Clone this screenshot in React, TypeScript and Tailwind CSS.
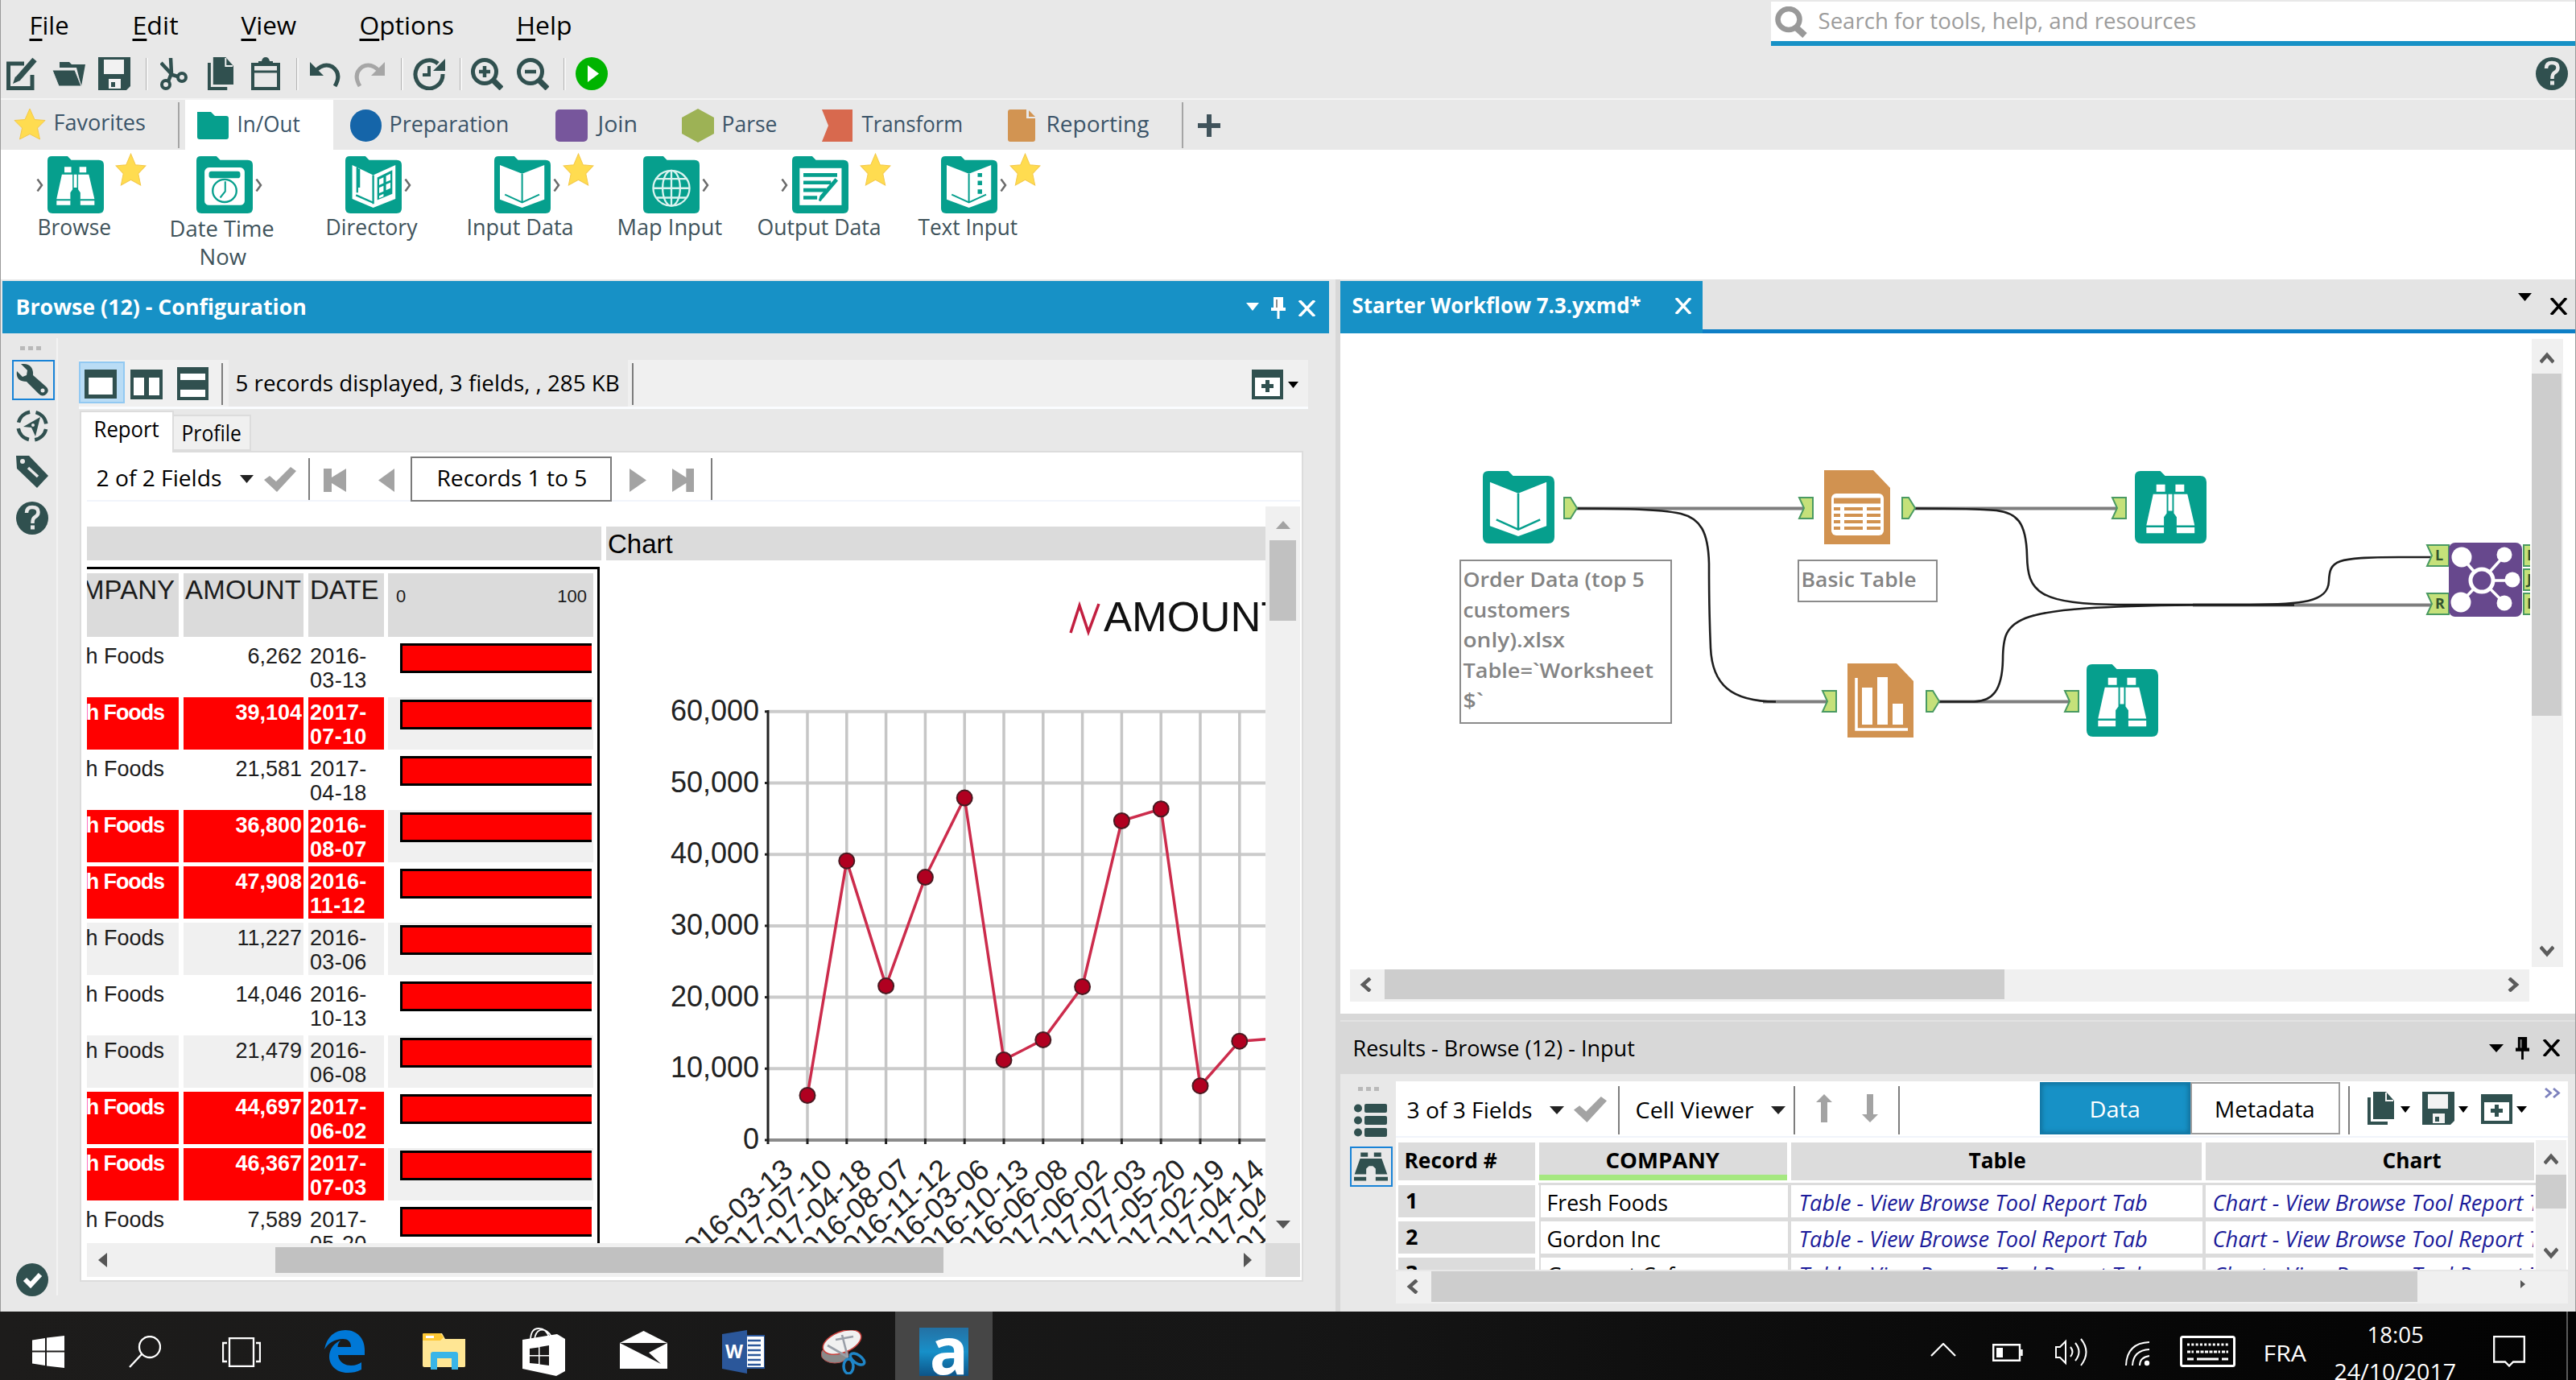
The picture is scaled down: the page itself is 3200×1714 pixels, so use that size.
import React, { ReactNode, useLayoutEffect, useRef, useState } from 'react';

const INK = '#30504f';

/* Single-line label whose glyphs are condensed or expanded to fill its box. */
function Fit({ className = '', children }: { className?: string; children: ReactNode }) {
  const outer = useRef<HTMLSpanElement>(null);
  const inner = useRef<HTMLSpanElement>(null);
  const [scale, setScale] = useState(1);
  useLayoutEffect(() => {
    if (outer.current && inner.current) {
      setScale((outer.current.offsetWidth + 2) / inner.current.offsetWidth);
    }
  }, []);
  return (
    <span ref={outer} className={`block shrink-0 whitespace-nowrap ${className}`}>
      <span
        ref={inner}
        className="inline-block origin-left"
        style={{ transform: `translateX(-0.5px) scaleX(${scale})` }}
      >
        {children}
      </span>
    </span>
  );
}

function Svg({ vb, className = '', children }: { vb: string; className?: string; children: ReactNode }) {
  return (
    <svg viewBox={vb} preserveAspectRatio="none" fill="none" className={`block shrink-0 ${className}`}>
      {children}
    </svg>
  );
}

/* ---------- small glyphs ---------- */

const Caret = ({ className = '' }: { className?: string }) => (
  <Svg vb="0 0 16 10" className={className}>
    <path d="M0 0H16L8 10Z" fill="currentColor" />
  </Svg>
);

const Cross = ({ className = '' }: { className?: string }) => (
  <Svg vb="0 0 22 20" className={className}>
    <path d="M2 0L20 20M20 0L2 20" stroke="currentColor" strokeWidth="3.4" />
  </Svg>
);

const Pin = ({ className = '' }: { className?: string }) => (
  <Svg vb="0 0 18 27" className={className}>
    <path d="M3 0H15V13H18V17H10.5V27H7.5V17H0V13H3Z" fill="currentColor" />
    <path d="M6 3H8V13H6Z" fill="#8d8d8d" />
  </Svg>
);

const Check = ({ className = '' }: { className?: string }) => (
  <Svg vb="0 0 40 31" className={className}>
    <path d="M0 16L7 11L15 18L33 0L40 5L16 31Z" fill="#a3a3a3" />
  </Svg>
);

const Chevron = ({ className = '' }: { className?: string }) => (
  <Svg vb="0 0 16 18" className={className}>
    <path d="M3 1L12 9L3 17" stroke="#5c5c5c" strokeWidth="4.5" />
  </Svg>
);

const Sep = ({ className = '' }: { className?: string }) => (
  <div className={`w-[2px] shrink-0 bg-[#7d7d7d] ${className}`} />
);

const BarSep = ({ className = '' }: { className?: string }) => (
  <div className={`h-[40px] w-[3px] shrink-0 border-l border-r-2 border-l-[#b4b4b4] border-r-[#f6f6f6] ${className}`} />
);

const Star = ({ className = '' }: { className?: string }) => (
  <Svg vb="0 0 40 40" className={className}>
    <path
      d="M20 1L26 14.5L39 15.5L29.500 25L32.500 39L20 32.500L7.500 39L10.500 25L1 15.500L14 14.500Z"
      fill="#ffdc50"
      stroke="#f4c84a"
      strokeWidth="1"
    />
  </Svg>
);

const Help = ({ className = '' }: { className?: string }) => (
  <Svg vb="0 0 40 41" className={className}>
    <ellipse cx="20" cy="20.500" rx="20" ry="20.500" fill={INK} />
    <path d="M13 14Q13 7 20 7Q27.500 7 27.500 13Q27.500 17 23 19.500Q20.500 21 20.500 27" stroke="#e8e8e8" strokeWidth="4.500" />
    <rect x="18" y="29.500" width="5" height="5" fill="#e8e8e8" />
  </Svg>
);

const Save = ({ className = '' }: { className?: string }) => (
  <Svg vb="0 0 40 41" className={className}>
    <path d="M0 0H40V36L35 41H0Z" fill={INK} />
    <rect x="7" y="3" width="25" height="18" fill="#f2f2f2" />
    <rect x="13" y="27" width="15" height="12" fill="#f2f2f2" />
    <rect x="16" y="31" width="5" height="6" fill={INK} />
  </Svg>
);

const Copy = ({ className = '' }: { className?: string }) => (
  <Svg vb="0 0 33 41" className={className}>
    <path d="M0 7H4V37H25V41H0Z" fill={INK} />
    <path d="M7 0H23L33 11V34H7Z" fill={INK} />
    <path d="M23 1V11H32" stroke="#f2f2f2" strokeWidth="2" />
  </Svg>
);

const PlusWindow = ({ className = '' }: { className?: string }) => (
  <Svg vb="0 0 39 37" className={className}>
    <rect width="39" height="37" fill={INK} />
    <rect x="4" y="10" width="31" height="23" fill="#fff" />
    <path d="M19.500 13V28M12 20.500H27" stroke={INK} strokeWidth="5" />
  </Svg>
);

const Binoculars = ({ fill, band }: { fill: string; band: string }) => (
  <>
    <path d="M27 17H38V26H27ZM51 17H62V26H51ZM42 29H47V50H42Z" fill={fill} />
    <path d="M23 29H40V53L36.500 58V78H14.500V68Z" fill={fill} />
    <path d="M66 29H49V53L52.500 58V78H75V68Z" fill={fill} />
    <path d="M13 69.500H37M52 69.500H76" stroke={band} strokeWidth="2.500" />
  </>
);

/* ---------- tool glyphs on the teal folder ---------- */

const T = '#069f8d';

const Book = () => (
  <>
    <path d="M9 14L44.500 28L80 14V69L44.500 82L9 69Z" fill="#fff" />
    <path d="M44.500 28V73M17 61L44.500 73.500L72 61" stroke={T} strokeWidth="2.600" />
  </>
);

const glyphs: Record<string, ReactNode> = {
  browse: <Binoculars fill="#fff" band={T} />,
  input: <Book />,
  date: (
    <>
      <rect x="13" y="18" width="64" height="60" rx="7" fill="#fff" />
      <rect x="20" y="24" width="50" height="11" rx="4" fill={T} />
      <ellipse cx="45" cy="55" rx="19" ry="18" stroke={T} strokeWidth="3" />
      <path d="M46 40V56L38 66" stroke={T} strokeWidth="2.600" />
    </>
  ),
  directory: (
    <>
      <path d="M11 14L44.500 30L80 14V68L44.500 82L11 68Z" fill="#fff" />
      <path d="M44.500 30V76M19 18V58M22 20V50M17 62L44.500 74" stroke={T} strokeWidth="3" />
      <path d="M51 34L75 22V60L51 70Z" fill={T} />
      <path d="M54 37L61 33.500V43L54 46ZM65 31.500L72 28V38L65 41ZM54 50L61 47V56L54 59ZM65 45L72 42V51L65 54ZM54 63L61 60V64L54 67Z" fill="#fff" />
    </>
  ),
  map: (
    <g stroke="#d9f3ef" strokeWidth="3">
      <ellipse cx="45" cy="51" rx="29" ry="28" />
      <ellipse cx="45" cy="51" rx="14" ry="28" />
      <path d="M45 23V79M16 51H74M21 36H69M21 66H69" />
    </g>
  ),
  output: (
    <>
      <rect x="12" y="19" width="67" height="59" fill="#fff" />
      <path d="M18 30H72M18 42H62M18 54H54M18 66H40" stroke={T} strokeWidth="6" />
      <path d="M72 38L48 66L44 71L46 64L70 36" stroke={T} strokeWidth="3.500" fill="#fff" />
    </>
  ),
  text: (
    <>
      <Book />
      <path d="M62 27V33M62 39V46M62 53V60" stroke={T} strokeWidth="7" />
    </>
  ),
};

const Folder = ({ glyph, className = '' }: { glyph: string; className?: string }) => (
  <Svg vb="0 0 90 91" className={className}>
    <path d="M7 0H32L38 6H82Q90 6 90 14V83Q90 91 82 91H8Q0 91 0 83V7Q0 0 7 0Z" fill={T} />
    {glyphs[glyph]}
  </Svg>
);

/* ---------- header ---------- */

const Menu = ({ k, rest, className }: { k: string; rest: string; className: string }) => (
  <Fit className={`mt-[11px] text-[31px] leading-[40px] text-black ${className}`}>
    <span className="underline decoration-[3px] underline-offset-[5px]">{k}</span>
    {rest}
  </Fit>
);

function Header() {
  return (
    <div className="flex h-[122px] shrink-0 justify-between">
      <div>
        <div className="flex h-[64px]">
          <Menu k="F" rest="ile" className="ml-[36px] w-[47px]" />
          <Menu k="E" rest="dit" className="ml-[81px] w-[55px]" />
          <Menu k="V" rest="iew" className="ml-[80px] w-[67px]" />
          <Menu k="O" rest="ptions" className="ml-[80px] w-[115px]" />
          <Menu k="H" rest="elp" className="ml-[80px] w-[67px]" />
        </div>
        <div className="flex h-[55px] items-center">
          <Svg vb="0 0 39 41" className="ml-[7px] h-[41px] w-[39px]">
            <path d="M22 8H2.500V38.500H32V22" stroke={INK} strokeWidth="5" />
            <path d="M35 3L14 27" stroke={INK} strokeWidth="7" />
            <path d="M11 24L17 29L8 33Z" fill={INK} />
          </Svg>
          <Svg vb="0 0 41 30" className="ml-[18px] h-[30px] w-[41px]">
            <path d="M9 7V0H21L24 3H41L36 30L30 7Z" fill={INK} />
            <path d="M0 10H28L36 30H8Z" fill={INK} stroke="#e8e8e8" strokeWidth="1" />
          </Svg>
          <Save className="ml-[16px] h-[41px] w-[40px]" />
          <BarSep className="ml-[19px]" />
          <Svg vb="0 0 34 41" className="ml-[15px] h-[41px] w-[34px]">
            <circle cx="7" cy="34" r="5" stroke={INK} strokeWidth="4" />
            <circle cx="27" cy="25" r="5" stroke={INK} strokeWidth="4" />
            <path d="M13 1L14 20L10 30M1 7L15 22L22 24" stroke={INK} strokeWidth="4.500" />
          </Svg>
          <Copy className="ml-[25px] h-[41px] w-[32px]" />
          <Svg vb="0 0 36 41" className="ml-[22px] h-[41px] w-[36px]">
            <rect x="2" y="9" width="32" height="30" stroke={INK} strokeWidth="4" />
            <path d="M9 11V5H13Q14 0 18 0Q22 0 23 5H27V11Z" fill={INK} />
            <path d="M2 18H34" stroke={INK} strokeWidth="3" />
          </Svg>
          <BarSep className="ml-[20px]" />
          <Svg vb="0 0 38 35" className="ml-[14px] h-[35px] w-[38px]">
            <path d="M6 15Q17 3 28 9Q40 18 31 33" stroke={INK} strokeWidth="5" />
            <path d="M0 3V20H17Z" fill={INK} />
          </Svg>
          <Svg vb="0 0 38 35" className="ml-[17px] h-[35px] w-[38px]">
            <path d="M32 15Q21 3 10 9Q-2 18 7 33" stroke="#a6a6a6" strokeWidth="5" />
            <path d="M38 3V20H21Z" fill="#a6a6a6" />
          </Svg>
          <BarSep className="ml-[20px]" />
          <Svg vb="0 0 40 41" className="ml-[12px] h-[41px] w-[40px]">
            <path d="M31 8A17 17.500 0 1 0 37 21" stroke={INK} strokeWidth="5" />
            <path d="M40 2V17H25Z" fill={INK} />
            <path d="M20 11V22H12" stroke={INK} strokeWidth="4" />
          </Svg>
          <BarSep className="ml-[18px]" />
          <Svg vb="0 0 40 41" className="ml-[11px] h-[41px] w-[40px]">
            <circle cx="17" cy="18" r="14.500" stroke={INK} strokeWidth="5" />
            <path d="M28 29L38 39" stroke={INK} strokeWidth="7" />
            <path d="M17 11V25M10 18H24" stroke={INK} strokeWidth="4.500" />
          </Svg>
          <Svg vb="0 0 40 41" className="ml-[17px] h-[41px] w-[40px]">
            <circle cx="17" cy="18" r="14.500" stroke={INK} strokeWidth="5" />
            <path d="M28 29L38 39" stroke={INK} strokeWidth="7" />
            <path d="M10 18H24" stroke={INK} strokeWidth="4.500" />
          </Svg>
          <BarSep className="ml-[18px]" />
          <Svg vb="0 0 40 41" className="ml-[12px] h-[41px] w-[40px]">
            <ellipse cx="20" cy="20.500" rx="20" ry="20.500" fill="#00b400" />
            <path d="M15 10L29 20.500L15 31Z" fill="#fff" />
          </Svg>
        </div>
      </div>
      <div className="flex w-[999px] flex-col items-end">
        <div className="mt-[2px] flex h-[55px] w-full items-start border-b-[6px] border-[#1791c6] bg-white">
          <Svg vb="0 0 40 39" className="ml-[5px] mt-[6px] h-[39px] w-[40px]">
            <ellipse cx="17" cy="16" rx="13.500" ry="13" stroke="#999" strokeWidth="6.500" />
            <path d="M26 26L37 36" stroke="#999" strokeWidth="8" />
          </Svg>
          <Fit className="ml-[14px] mt-[4px] w-[468px] text-[27px] leading-[40px] text-[#9c9c9c]">
            Search for tools, help, and resources
          </Fit>
        </div>
        <Help className="mr-[9px] mt-[14px] h-[41px] w-[40px]" />
      </div>
    </div>
  );
}

function Categories() {
  const label = 'mt-[9px] text-[28px] leading-[40px] text-[#3b5468]';
  return (
    <div className="flex h-[64px] shrink-0 border-t-2 border-[#f4f4f4]">
      <Star className="ml-[16px] mt-[10px] h-[40px] w-[40px]" />
      <Fit className="ml-[10px] mt-[7px] w-[112px] text-[28px] leading-[40px] text-[#3b5468]">Favorites</Fit>
      <div className="ml-[42px] mt-[3px] h-[57px] w-[2px] bg-[#a5a5a5]" />
      <div className="ml-[7px] flex w-[184px] bg-white">
        <Svg vb="0 0 39 34" className="ml-[15px] mt-[15px] h-[34px] w-[39px]">
          <path d="M3 0H17L22 5H36Q39 5 39 8V31Q39 34 36 34H3Q0 34 0 31V0Z" fill={T} />
        </Svg>
        <Fit className={`ml-[11px] w-[76px] ${label}`}>In/Out</Fit>
      </div>
      <div className="ml-[21px] mt-[12px] h-[40px] w-[39px] rounded-full bg-[#1565a9]" />
      <Fit className={`ml-[10px] w-[147px] ${label}`}>Preparation</Fit>
      <div className="ml-[59px] mt-[12px] h-[40px] w-[40px] rounded-[5px] bg-[#77569c]" />
      <Fit className={`ml-[13px] w-[48px] ${label}`}>Join</Fit>
      <Svg vb="0 0 40 42" className="ml-[56px] mt-[11px] h-[42px] w-[40px]">
        <path d="M20 0L40 11V31L20 42L0 31V11Z" fill="#9db255" />
      </Svg>
      <Fit className={`ml-[10px] w-[67px] ${label}`}>Parse</Fit>
      <Svg vb="0 0 38 40" className="ml-[57px] mt-[12px] h-[40px] w-[38px]">
        <path d="M0 0H38V40H0L8 20Z" fill="#d8694e" />
      </Svg>
      <Fit className={`ml-[12px] w-[124px] ${label}`}>Transform</Fit>
      <Svg vb="0 0 34 40" className="ml-[57px] mt-[12px] h-[40px] w-[34px]">
        <path d="M3 0H23V11H34V37Q34 40 31 40H3Q0 40 0 37V3Q0 0 3 0Z" fill="#d29452" />
        <path d="M26 1L34 9H26Z" fill="#d29452" />
      </Svg>
      <Fit className={`ml-[14px] w-[126px] ${label}`}>Reporting</Fit>
      <div className="ml-[42px] mt-[3px] h-[57px] w-[2px] bg-[#a5a5a5]" />
      <Svg vb="0 0 28 28" className="ml-[18px] mt-[18px] h-[28px] w-[28px]">
        <path d="M14 0V28M0 14H28" stroke="#40535b" strokeWidth="6" />
      </Svg>
    </div>
  );
}

const PaletteArrow = ({ className }: { className: string }) => (
  <Svg vb="0 0 9 16" className={`mt-[36px] h-[16px] w-[9px] ${className}`}>
    <path d="M1.500 0.500L7 8L1.500 15.500" stroke="#6b6b6b" strokeWidth="2.500" />
  </Svg>
);

function Tool({ glyph, before, after, star, children }: { glyph: string; before?: boolean; after?: boolean; star?: boolean; children: ReactNode }) {
  return (
    <div className="flex w-[185px] flex-col items-center">
      <div className="flex h-[78px] w-full">
        <div className="flex flex-1 justify-end">{before && <PaletteArrow className="mr-[5px]" />}</div>
        <Folder glyph={glyph} className="mt-[8px] h-[71px] w-[70px]" />
        <div className="flex flex-1">
          {after && <PaletteArrow className="ml-[3px]" />}
          {star && <Star className={after ? 'ml-[3px] mt-[4px] h-[41px] w-[39px]' : 'ml-[14px] mt-[4px] h-[41px] w-[39px]'} />}
        </div>
      </div>
      {children}
    </div>
  );
}

function Palette() {
  const l = 'text-[27px] leading-[36px] text-[#40535b]';
  return (
    <div className="flex h-[161px] shrink-0 bg-white">
      <Tool glyph="browse" before star><Fit className={`mr-[3px] w-[90px] ${l}`}>Browse</Fit></Tool>
      <Tool glyph="date" after>
        <Fit className="mr-[7px] mt-[2px] w-[128px] text-[27px] leading-[35px] text-[#40535b]">Date Time</Fit>
        <Fit className="mr-[5px] w-[57px] text-[27px] leading-[35px] text-[#40535b]">Now</Fit>
      </Tool>
      <Tool glyph="directory" after><Fit className={`mr-[5px] w-[112px] ${l}`}>Directory</Fit></Tool>
      <Tool glyph="input" after star><Fit className={`mr-[6px] w-[131px] ${l}`}>Input Data</Fit></Tool>
      <Tool glyph="map" after><Fit className={`mr-[4px] w-[129px] ${l}`}>Map Input</Fit></Tool>
      <Tool glyph="output" before star><Fit className={`mr-[3px] w-[152px] ${l}`}>Output Data</Fit></Tool>
      <Tool glyph="text" after star><Fit className={`mr-[3px] w-[122px] ${l}`}>Text Input</Fit></Tool>
    </div>
  );
}

/* ---------- report ---------- */

const rows: [string, string, string, boolean][] = [
  ['6,262', '2016-', '03-13', false],
  ['39,104', '2017-', '07-10', true],
  ['21,581', '2017-', '04-18', false],
  ['36,800', '2016-', '08-07', true],
  ['47,908', '2016-', '11-12', true],
  ['11,227', '2016-', '03-06', false],
  ['14,046', '2016-', '10-13', false],
  ['21,479', '2016-', '06-08', false],
  ['44,697', '2017-', '06-02', true],
  ['46,367', '2017-', '07-03', true],
  ['7,589', '2017-', '05-20', false],
];

function ReportTable() {
  return (
    <div className="mt-[8px] w-[637px] border-r-[3px] border-t-[3px] border-black bg-white pt-[5px] font-['Liberation_Sans',sans-serif]">
      <div className="mb-[5px] flex h-[79px] text-[33px] leading-[41px] text-[#1c1c1c]">
        <div className="mr-[6px] flex w-[114px] justify-end overflow-hidden bg-[#dbdbdb] pr-[5px]">COMPANY</div>
        <div className="mr-[6px] w-[149px] bg-[#dbdbdb] pl-[2px] tracking-[0.2px]">AMOUNT</div>
        <div className="mr-[5px] w-[94px] bg-[#dbdbdb] pl-[2px]">DATE</div>
        <div className="flex w-[255px] justify-between bg-[#dbdbdb] pl-[10px] pr-[8px] pt-[8px] text-[22px]">
          <span>0</span>
          <span>100</span>
        </div>
      </div>
      {rows.map(([amount, year, day, hot], i) => {
        const tone = hot
          ? 'bg-[#ff0000] font-bold text-white pt-[4px]'
          : i % 2
            ? 'bg-[#f0f0f0] text-[#1c1c1c] pt-[4px]'
            : 'bg-white text-[#1c1c1c] pt-[4px]';
        return (
          <div key={day} className="mb-[5px] flex h-[65px] text-[27px] leading-[30px]">
            <div className={`mr-[6px] flex w-[114px] justify-end overflow-hidden whitespace-nowrap pr-[18px] ${hot ? 'tracking-[-1.1px]' : 'tracking-normal'} ${tone}`}>Fresh Foods</div>
            <div className={`mr-[6px] w-[149px] pr-[2px] text-right ${tone}`}>{amount}</div>
            <div className={`mr-[5px] w-[94px] pl-[2px] tracking-[0.3px] ${tone}`}>{year}<br />{day}</div>
            <div className={i % 2 ? 'w-[255px] bg-[#f0f0f0] pl-[15px] pt-[3px]' : 'w-[255px] pl-[15px] pt-[3px]'}>
              <div className="h-[37px] w-[238px] border-[3px] border-r-0 border-black bg-[#ff0000]" />
            </div>
          </div>
        );
      })}
    </div>
  );
}

const series = [6262, 39104, 21581, 36800, 47908, 11227, 14046, 21479, 44697, 46367, 7589, 13850, 14250];
const dates = ['2016-03-13', '2017-07-10', '2017-04-18', '2016-08-07', '2016-11-12', '2016-03-06', '2016-10-13', '2016-06-08', '2017-06-02', '2017-07-03', '2017-05-20', '2017-02-19', '2017-04-14', '2017-04-02', '2017-08-11'];
const px = (i: number) => 1003 + i * 48.8;
const py = (v: number) => 1416 - (v / 10000) * 88.7;

function AmountChart() {
  const ticks = [0, 10000, 20000, 30000, 40000, 50000, 60000];
  return (
    <svg viewBox="753 696 819 848" fill="none" className="block h-[848px] w-[819px] font-['Liberation_Sans',sans-serif]">
      <path d="M1330 786L1341 752L1352 785L1365 750" stroke="#c21f40" strokeWidth="3.500" />
      <text x="1371" y="784" fontSize="52.500" fill="#111">AMOUNT</text>
      {ticks.slice(1).map((t) => <path key={t} d={`M954 ${py(t)}H1572`} stroke="#cbcbcb" strokeWidth="4" />)}
      {series.slice(0, 12).map((_, i) => <path key={i} d={`M${px(i)} ${py(60000)}V1416`} stroke="#c6c6c6" strokeWidth="3.500" />)}
      <path d="M953 1416H1572" stroke="#8b8b8b" strokeWidth="4" />
      <path d="M954 882V1421" stroke="#222" strokeWidth="3" />
      {ticks.map((t) => (
        <g key={t}>
          <path d={`M950 ${py(t)}H955`} stroke="#222" strokeWidth="3" />
          <text x="943" y={py(t) + 11} fontSize="36" fill="#222" textAnchor="end">{t.toLocaleString('en-US')}</text>
        </g>
      ))}
      <polyline points={series.map((v, i) => `${px(i)},${py(v)}`).join(' ')} stroke="#cc2c4c" strokeWidth="3.500" />
      {series.slice(0, 12).map((v, i) => (
        <g key={i}>
          <circle cx={px(i)} cy={py(v)} r="9.500" fill="#b00020" stroke="#4a1a22" strokeWidth="2" />
          <path d={`M${px(i)} 1414V1421`} stroke="#222" strokeWidth="3" />
        </g>
      ))}
      {dates.map((d, i) => (
        <text key={d} fontSize="36" fill="#222" textAnchor="end" transform={`translate(${px(i) - 16} 1456) rotate(-41)`}>{d}</text>
      ))}
    </svg>
  );
}

const Tri = ({ d, className, fill = '#555' }: { d: string; className: string; fill?: string }) => (
  <Svg vb="0 0 10 10" className={className}><path d={d} fill={fill} /></Svg>
);

function Configuration() {
  return (
    <div className="flex w-[1650px] shrink-0 flex-col bg-[#e8e8e8]">
      <div className="ml-[2px] mt-[2px] flex h-[65px] bg-[#1791c6] text-white">
        <Fit className="ml-[17px] mt-[12px] w-[359px] text-[26px] font-bold leading-[40px]">Browse (12) - Configuration</Fit>
        <Caret className="ml-[1169px] mt-[27px] h-[10px] w-[16px]" />
        <Pin className="ml-[15px] mt-[20px] h-[27px] w-[18px]" />
        <Cross className="ml-[15px] mt-[24px] h-[20px] w-[23px]" />
      </div>
      <div className="flex flex-1">
        <div className="mb-[20px] mt-[6px] flex w-[71px] flex-col border-r-2 border-[#f3f3f3] pl-[14px]">
          <div className="ml-[10px] mt-[10px] flex gap-[4px]">
            {[0, 1, 2].map((i) => <div key={i} className="h-[5px] w-[6px] bg-[#b9b9b9]" />)}
          </div>
          <div className="mt-[12px] h-[50px] w-[53px] border-2 border-[#1883d7] pl-[3px] pt-[3px]">
            <Svg vb="0 0 40 40" className="h-[40px] w-[40px]">
              <path d="M6 0L14 8L13 14L8 16L1 9Q-1 22 13 22L28 37Q33 42 38 37Q42 32 37 28L21 14Q22 -1 6 0Z" fill={INK} />
              <circle cx="33" cy="33" r="2.500" fill="#e8e8e8" />
            </Svg>
          </div>
          <Svg vb="0 0 40 40" className="ml-[5px] mt-[12px] h-[40px] w-[40px]">
            <circle cx="20" cy="20" r="17.500" stroke={INK} strokeWidth="4.500" strokeDasharray="20 7.500" strokeDashoffset="-4" />
            <path d="M30 9L24 33L19 22L9 21Z" fill={INK} />
            <circle cx="21" cy="19" r="2" fill="#e8e8e8" />
          </Svg>
          <Svg vb="0 0 40 40" className="ml-[5px] mt-[17px] h-[40px] w-[40px]">
            <path d="M0 0H16L40 25L26 40L1 16Z" fill={INK} />
            <circle cx="8" cy="7" r="3" fill="#e8e8e8" />
            <path d="M15 15L27 26" stroke="#e8e8e8" strokeWidth="3.500" />
          </Svg>
          <Help className="ml-[5px] mt-[17px] h-[41px] w-[40px]" />
          <div className="flex-1" />
          <Svg vb="0 0 40 41" className="mb-[-1px] ml-[5px] h-[41px] w-[40px]">
            <ellipse cx="20" cy="20.500" rx="20" ry="20.500" fill={INK} />
            <path d="M11 20L18 27L30 14" stroke="#fff" strokeWidth="6" />
          </Svg>
        </div>
        <div className="pl-[26px] pt-[33px]">
          <div className="flex h-[61px] w-[1527px] border-b-[3px] border-[#fafcff] bg-[#f0f0f0]">
            <div className="mt-[2px] h-[52px] w-[57px] border-2 border-[#92c9f2] bg-[#b9dcf5] pl-[5px] pt-[8px]">
              <Svg vb="0 0 39 36" className="h-[36px] w-[40px]">
                <rect width="39" height="36" fill={INK} />
                <rect x="5" y="10" width="29" height="21" fill="#fff" />
              </Svg>
            </div>
            <Svg vb="0 0 40 37" className="ml-[7px] mt-[12px] h-[37px] w-[40px]">
              <rect width="40" height="37" fill={INK} />
              <path d="M4 10H17V32H4ZM23 10H36V32H23Z" fill="#fff" />
            </Svg>
            <Svg vb="0 0 39 41" className="ml-[18px] mt-[9px] h-[41px] w-[39px]">
              <rect width="39" height="41" fill={INK} />
              <path d="M4 8H35V16H4ZM4 28H35V37H4Z" fill="#fff" />
            </Svg>
            <Sep className="ml-[16px] mt-[4px] h-[52px]" />
            <div className="ml-[7px] w-[496px] bg-[#e8e8e8] pl-[9px] pt-[8px]">
              <Fit className="w-[475px] text-[28px] leading-[40px] text-black">5 records displayed, 3 fields, , 285 KB</Fit>
            </div>
            <Sep className="ml-[5px] mt-[4px] h-[52px]" />
            <PlusWindow className="ml-[768px] mt-[12px] h-[37px] w-[39px]" />
            <Caret className="ml-[6px] mt-[27px] h-[8px] w-[13px] text-black" />
          </div>
          <div className="relative z-10 -mb-[2px] ml-[1px] flex h-[54px]">
            <div className="mt-[2px] w-[117px] border-2 border-b-0 border-[#dcdcdc] bg-white pl-[16px]">
              <Fit className="mt-[1px] w-[79px] text-[27px] leading-[40px] text-black">Report</Fit>
            </div>
            <div className="mb-[2px] mt-[7px] w-[96px] border-2 border-l-0 border-[#dcdcdc] bg-[#f0f0f0] pl-[10px]">
              <Fit className="mt-[1px] w-[72px] text-[27px] leading-[40px] text-black">Profile</Fit>
            </div>
          </div>
          <div className="ml-[1px] h-[1032px] w-[1520px] border-2 border-[#dcdcdc] bg-white pl-[7px]">
            <div className="flex h-[61px] w-[1507px] border-b-2 border-[#f1f4fb]">
              <Fit className="ml-[12px] mt-[11px] w-[154px] text-[28px] leading-[40px] text-black">2 of 2 Fields</Fit>
              <Caret className="ml-[24px] mt-[28px] h-[10px] w-[17px] text-[#222]" />
              <Check className="ml-[13px] mt-[18px] h-[31px] w-[40px]" />
              <Sep className="ml-[15px] mt-[7px] h-[52px]" />
              <Svg vb="0 0 28 29" className="ml-[17px] mt-[20px] h-[29px] w-[28px]">
                <path d="M0 0H10V11L28 0V29L10 18V29H0Z" fill="#a3a3a3" />
              </Svg>
              <Tri d="M10 0V10L0 5Z" fill="#a3a3a3" className="ml-[40px] mt-[20px] h-[29px] w-[20px]" />
              <div className="ml-[20px] mt-[5px] h-[56px] w-[250px] border-2 border-[#7a7a7a] pl-[31px] pt-[4px]">
                <Fit className="w-[185px] text-[28px] leading-[40px] text-black">Records 1 to 5</Fit>
              </div>
              <Tri d="M0 0L10 5L0 10Z" fill="#a3a3a3" className="ml-[22px] mt-[20px] h-[29px] w-[21px]" />
              <Svg vb="0 0 28 29" className="ml-[32px] mt-[20px] h-[29px] w-[27px]">
                <path d="M28 0H18V11L0 0V29L18 18V29H28Z" fill="#a3a3a3" />
              </Svg>
              <Sep className="ml-[21px] mt-[7px] h-[52px]" />
            </div>
            <div className="mt-[6px] flex h-[915px]">
              <div className="flex w-[1464px] overflow-hidden pt-[25px]">
                <div className="w-[645px] shrink-0">
                  <div className="h-[42px] w-[639px] bg-[#dbdbdb]" />
                  <ReportTable />
                </div>
                <div className="w-[819px] shrink-0">
                  <div className="h-[42px] bg-[#dbdbdb] pl-[2px] font-['Liberation_Sans',sans-serif] text-[33px] leading-[43px] text-black">Chart</div>
                  <AmountChart />
                </div>
              </div>
              <div className="flex w-[43px] flex-col items-center bg-[#f0f0f0]">
                <Tri d="M5 0L10 10H0Z" fill="#a3a3a3" className="mt-[18px] h-[10px] w-[18px]" />
                <div className="mt-[14px] h-[100px] w-[33px] bg-[#c1c1c1]" />
                <div className="flex-1" />
                <Tri d="M0 0H10L5 10Z" className="mb-[18px] h-[10px] w-[18px]" />
              </div>
            </div>
            <div className="flex h-[42px] w-[1507px] bg-[#f0f0f0]">
              <Tri d="M10 0V10L0 5Z" className="ml-[14px] mt-[12px] h-[18px] w-[11px]" />
              <div className="ml-[209px] mt-[5px] h-[32px] w-[830px] bg-[#c1c1c1]" />
              <Tri d="M0 0L10 5L0 10Z" className="ml-[373px] mt-[12px] h-[18px] w-[10px]" />
              <div className="ml-[17px] w-[43px] bg-[#dbdbdb]" />
            </div>
          </div>
        </div>
      </div>
    </div>
  );
}

/* ---------- workflow ---------- */

const OutPort = ({ x, y }: { x: number; y: number }) => (
  <path d="M0 0H8L16 13L8 26H0Z" transform={`translate(${x} ${y})`} fill="#c5e17a" stroke="#4a9a62" strokeWidth="2" />
);
const InPort = ({ x, y }: { x: number; y: number }) => (
  <path d="M0 0H17V26H0L6 13Z" transform={`translate(${x} ${y})`} fill="#c5e17a" stroke="#4a9a62" strokeWidth="2" />
);

const Sheet = ({ className, children }: { className: string; children: ReactNode }) => (
  <Svg vb="0 0 82 92" className={className}>
    <path d="M0 0H61L82 22V92H0Z" fill="#d19250" />
    {children}
  </Svg>
);

function Canvas() {
  return (
    <div className="relative h-[790px] w-[1480px] overflow-hidden">
      <svg viewBox="1665 414 1478 790" fill="none" className="block h-[790px] w-[1478px]">
        <g stroke="#7e7e7e" strokeWidth="4">
          <path d="M1958 631.500H2243M2379 631.500H2632M2409 871.500H2573M2190 871.500H2274M2724 751.500H3022" />
        </g>
        <g stroke="#1e1e1e" strokeWidth="2.600">
          <path d="M1958 631.500C2010 631.500 2060 632 2088 638C2112 644 2122 660 2123 700C2123 740 2123 760 2125 805C2127 850 2150 871 2206 871.500" />
          <path d="M2379 631.500C2430 631.500 2460 632 2480 634C2505 637 2517 648 2518 690C2519 735 2530 751 2640 751H2790C2860 751 2892 748 2893 722C2894 696 2900 692 2980 692H3024" />
          <path d="M2409 871.500H2452C2475 871 2487 858 2488 820C2488 765 2498 754 2724 751.500H2850" />
        </g>
        <OutPort x={1943} y={618} />
        <InPort x={2235} y={618} />
        <OutPort x={2363} y={618} />
        <InPort x={2624} y={618} />
        <InPort x={2264} y={858} />
        <OutPort x={2393} y={858} />
        <InPort x={2565} y={858} />
        {[['L', 677], ['R', 737]].map(([t, y]) => (
          <g key={t}>
            <path d="M0 0H27V26H0L6 13Z" transform={`translate(3015 ${y})`} fill="#c5e17a" stroke="#4a9a62" strokeWidth="2" />
            <text x="3025" y={Number(y) + 19} fontSize="18" fontWeight="700" fill="#33532f">{t}</text>
          </g>
        ))}
        {[['L', 677], ['J', 707], ['R', 737]].map(([t, y]) => (
          <g key={t}>
            <path d="M0 0H26V26H0Z" transform={`translate(3135 ${y})`} fill="#c5e17a" stroke="#4a9a62" strokeWidth="2" />
            <text x="3139" y={Number(y) + 19} fontSize="18" fontWeight="700" fill="#33532f">{t}</text>
          </g>
        ))}
      </svg>
      <Folder glyph="input" className="absolute left-[177px] top-[171px] h-[90px] w-[89px]" />
      <Sheet className="absolute left-[601px] top-[170px] h-[92px] w-[82px]">
        <rect x="9" y="29" width="65" height="52" rx="6" fill="#fff" />
        <path d="M12 38H70" stroke="#d19250" strokeWidth="7" />
        <path d="M12 48H20M25 48H48M53 48H70M12 56H20M25 56H48M53 56H70M12 64H20M25 64H48M53 64H70M12 72H20M25 72H48M53 72H70" stroke="#d19250" strokeWidth="3.800" />
      </Sheet>
      <Folder glyph="browse" className="absolute left-[987px] top-[171px] h-[90px] w-[89px]" />
      <Sheet className="absolute left-[630px] top-[410px] h-[92px] w-[82px]">
        <path d="M11 18V82H75" stroke="#fff" strokeWidth="3.500" />
        <path d="M18 30H31V76H18ZM37 17H50V76H37ZM56 50H69V76H56Z" fill="#fff" />
      </Sheet>
      <Folder glyph="browse" className="absolute left-[927px] top-[411px] h-[90px] w-[89px]" />
      <Svg vb="0 0 91 92" className="absolute left-[1377px] top-[260px] h-[92px] w-[91px]">
        <rect width="91" height="92" rx="8" fill="#67488d" />
        <path d="M41 47L15 17M41 47L15 74M41 47L70 15M41 47H78M41 47L70 76" stroke="#fff" strokeWidth="3.500" />
        <circle cx="41" cy="47" r="14" fill="#67488d" stroke="#fff" strokeWidth="5" />
        <g fill="#fff">
          <circle cx="16" cy="18" r="12.500" />
          <circle cx="15" cy="74" r="12.500" />
          <circle cx="69" cy="15" r="9.500" />
          <circle cx="79" cy="46" r="9.500" />
          <circle cx="69" cy="75" r="9.500" />
        </g>
      </Svg>
      <div className="absolute left-[148px] top-[281px] h-[204px] w-[264px] border-2 border-[#8b8b8b] bg-white pl-[3px] pt-[4px] text-[26px] font-semibold leading-[37.5px] text-[#848484]">
        <Fit className="w-[223px]">Order Data (top 5</Fit>
        <Fit className="w-[131px]">customers</Fit>
        <Fit className="w-[124px]">only).xlsx</Fit>
        <Fit className="w-[234px]">Table=`Worksheet</Fit>
        <Fit className="w-[23px]">$`</Fit>
      </div>
      <div className="absolute left-[568px] top-[281px] h-[53px] w-[174px] border-2 border-[#8b8b8b] bg-white pl-[3px] pt-[4px] text-[26px] font-semibold leading-[37.5px] text-[#848484]">
        <Fit className="w-[141px]">Basic Table</Fit>
      </div>
    </div>
  );
}

function Workflow() {
  return (
    <div className="flex h-[912px] flex-col bg-white">
      <div className="flex h-[67px] shrink-0 bg-[#e4e4e4]">
        <div className="mt-[2px] flex h-[65px] w-[450px] bg-[#1791c6] text-white">
          <Fit className="ml-[15px] mt-[10px] w-[357px] text-[26px] font-bold leading-[40px]">Starter Workflow 7.3.yxmd*</Fit>
          <Cross className="ml-[43px] mt-[21px] h-[20px] w-[22px]" />
        </div>
        <div className="flex flex-1 justify-end border-b-[5px] border-[#0e7fc6] text-black">
          <Caret className="mt-[17px] h-[10px] w-[17px]" />
          <Cross className="ml-[22px] mr-[9px] mt-[23px] h-[21px] w-[23px]" />
        </div>
      </div>
      <div className="flex">
        <Canvas />
        <div className="mt-[7px] flex h-[780px] w-[39px] flex-col bg-[#f0f0f0]">
          <Chevron className="ml-[11px] mt-[15px] h-[18px] w-[16px] -rotate-90" />
          <div className="mt-[10px] h-[425px] w-[37px] bg-[#cdcdcd]" />
          <Chevron className="ml-[11px] mt-[283px] h-[18px] w-[16px] rotate-90" />
        </div>
      </div>
      <div className="ml-[12px] flex h-[40px] w-[1465px] bg-[#f0f0f0]">
        <Chevron className="ml-[12px] mt-[10px] h-[18px] w-[16px] rotate-180" />
        <div className="ml-[15px] h-[37px] w-[770px] bg-[#cdcdcd]" />
        <Chevron className="ml-[624px] mt-[10px] h-[18px] w-[16px]" />
      </div>
    </div>
  );
}

/* ---------- results ---------- */

function ResultRow({ n, company }: { n: string; company: ReactNode }) {
  const cell = 'overflow-hidden bg-white text-[27px] leading-[40px]';
  return (
    <div className="flex h-[45px] shrink-0">
      <div className="mr-[5px] h-[40px] w-[170px] bg-[#dcdcdc] pl-[9px] text-[27px] font-bold leading-[38px] text-black">{n}</div>
      <div className="flex h-[45px] border-b-[5px] border-l-2 border-[#dcdcdc] bg-[#dcdcdc]">
        <div className={`mr-[4px] w-[307px] pl-[8px] pt-[2px] text-black ${cell}`}>{company}</div>
        <div className={`mr-[4px] w-[511px] pl-[10px] pt-[2px] italic text-[#1b1b9a] ${cell}`}>
          <Fit className="w-[431px]">Table - View Browse Tool Report Tab</Fit>
        </div>
        <div className={`w-[407px] pl-[9px] pt-[2px] italic text-[#1b1b9a] ${cell}`}>
          <Fit className="w-[436px]">Chart - View Browse Tool Report Tab</Fit>
        </div>
      </div>
    </div>
  );
}

function Results() {
  const head = 'h-[47px] bg-[#dcdcdc] text-[27px] font-bold leading-[40px] text-black flex shrink-0';
  return (
    <div className="flex flex-1 flex-col border-t-[8px] border-[#d8d8d8] bg-[#e8e8e8]">
      <div className="flex h-[67px] shrink-0 border-t-2 border-[#e2e2e2] bg-[#d8d8d8] text-black">
        <Fit className="ml-[16px] mt-[13px] w-[348px] text-[27px] leading-[40px]">Results - Browse (12) - Input</Fit>
        <Caret className="ml-[1063px] mt-[28px] h-[10px] w-[18px]" />
        <Pin className="ml-[15px] mt-[19px] h-[28px] w-[17px]" />
        <Cross className="ml-[16px] mt-[22px] h-[21px] w-[23px]" />
      </div>
      <div className="flex">
        <div className="w-[69px] pl-[12px]">
          <div className="ml-[10px] mt-[16px] flex gap-[4px]">
            {[0, 1, 2].map((i) => <div key={i} className="h-[5px] w-[6px] bg-[#b9b9b9]" />)}
          </div>
          <Svg vb="0 0 41 41" className="ml-[5px] mt-[16px] h-[41px] w-[41px]">
            <g fill={INK}>
              <circle cx="5" cy="5.500" r="5" /><rect x="13" y="0" width="28" height="11" rx="2" />
              <circle cx="5" cy="20.500" r="5" /><rect x="13" y="15" width="28" height="11" rx="2" />
              <circle cx="5" cy="35.500" r="5" /><rect x="13" y="30" width="28" height="11" rx="2" />
            </g>
          </Svg>
          <div className="mt-[12px] h-[50px] w-[53px] border-2 border-[#1883d7] pl-[3px] pt-[5px]">
            <Svg vb="14 16 61 63" className="h-[36px] w-[42px]">
              <path d="M26 17H39V26H26ZM50 17H63V26H50ZM25 30H64L74 64H53V52L48 46H41L36 52V64H15ZM14 70H36V78H14ZM53 70H75V78H53Z" fill={INK} />
            </Svg>
          </div>
        </div>
        <div className="mt-[9px] w-[1456px]">
          <div className="flex h-[70px] border-b-2 border-[#f1f4fb] bg-white">
            <Fit className="ml-[14px] mt-[15px] w-[154px] text-[28px] leading-[40px] text-black">3 of 3 Fields</Fit>
            <Caret className="ml-[23px] mt-[31px] h-[10px] w-[18px] text-[#222]" />
            <Check className="ml-[12px] mt-[19px] h-[32px] w-[41px]" />
            <Sep className="ml-[14px] mt-[6px] h-[60px]" />
            <Fit className="ml-[20px] mt-[15px] w-[145px] text-[28px] leading-[40px] text-black">Cell Viewer</Fit>
            <Caret className="ml-[23px] mt-[31px] h-[10px] w-[18px] text-[#222]" />
            <Sep className="ml-[10px] mt-[6px] h-[60px]" />
            <Svg vb="0 0 20 35" className="ml-[26px] mt-[16px] h-[35px] w-[20px]">
              <path d="M10 0L20 10H14V35H6V10H0Z" fill="#a3a3a3" />
            </Svg>
            <Svg vb="0 0 20 35" className="ml-[37px] mt-[16px] h-[35px] w-[20px]">
              <path d="M10 35L20 25H14V0H6V25H0Z" fill="#a3a3a3" />
            </Svg>
            <Sep className="ml-[25px] mt-[6px] h-[60px]" />
            <div className="ml-[174px] mt-[1px] flex h-[65px] w-[187px] items-center justify-center border-2 border-[#1279a8] bg-[#1791c6] shadow-[inset_0_0_6px_#11698f]">
              <Fit className="mr-[3px] mt-[1px] w-[61px] text-[28px] leading-[40px] text-white">Data</Fit>
            </div>
            <div className="mt-[1px] flex h-[65px] w-[186px] items-center justify-center border-2 border-[#9d9d9d] bg-white">
              <Fit className="mr-[2px] mt-[1px] w-[123px] text-[28px] font-medium leading-[40px] text-black">Metadata</Fit>
            </div>
            <Sep className="ml-[10px] mt-[6px] h-[60px]" />
            <Copy className="ml-[22px] mt-[13px] h-[41px] w-[33px]" />
            <Caret className="ml-[8px] mt-[31px] h-[8px] w-[12px] text-black" />
            <Save className="ml-[15px] mt-[13px] h-[41px] w-[40px]" />
            <Caret className="ml-[5px] mt-[31px] h-[8px] w-[12px] text-black" />
            <PlusWindow className="ml-[16px] mt-[16px] h-[37px] w-[39px]" />
            <Caret className="ml-[5px] mt-[31px] h-[8px] w-[13px] text-black" />
            <Svg vb="0 0 20 13" className="ml-[22px] mt-[8px] h-[13px] w-[20px]">
              <path d="M1 1L7.500 6.500L1 12M11 1L17.500 6.500L11 12" stroke="#7d82bd" strokeWidth="2.800" />
            </Svg>
          </div>
          <div className="flex h-[164px] bg-white">
            <div className="w-[1416px] overflow-hidden pl-[3px]">
              <div className="mt-[6px] flex">
                <div className={`mr-[5px] w-[170px] pl-[8px] pt-[2px] ${head}`}><Fit className="w-[113px]">Record #</Fit></div>
                <div className={`mr-[5px] w-[308px] justify-center border-b-[7px] border-[#a5e880] pt-[2px] pr-[2px] ${head}`}><Fit className="w-[140px]">COMPANY</Fit></div>
                <div className={`mr-[5px] w-[510px] justify-center pt-[2px] ${head}`}><Fit className="w-[69px]">Table</Fit></div>
                <div className={`w-[408px] pl-[220px] pt-[2px] ${head}`}><Fit className="w-[71px]">Chart</Fit></div>
              </div>
              <div className="ml-[174px] mt-[3px] h-[3px] bg-[#dcdcdc]" />
              <ResultRow n="1" company={<Fit className="w-[148px]">Fresh Foods</Fit>} />
              <ResultRow n="2" company={<Fit className="w-[139px]">Gordon Inc</Fit>} />
              <ResultRow n="3" company={<Fit className="w-[172px]">Gourmet Cafe</Fit>} />
            </div>
            <div className="mt-[3px] flex w-[38px] flex-col bg-[#f0f0f0]">
              <Chevron className="ml-[11px] mt-[15px] h-[18px] w-[16px] -rotate-90" />
              <div className="mt-[10px] h-[42px] w-[38px] bg-[#cdcdcd]" />
              <Chevron className="ml-[11px] mt-[46px] h-[18px] w-[16px] rotate-90" />
            </div>
          </div>
          <div className="mt-[2px] flex h-[40px] bg-[#f0f0f0]">
            <Chevron className="ml-[13px] mt-[10px] h-[18px] w-[16px] rotate-180" />
            <div className="ml-[15px] h-[38px] w-[1225px] bg-[#cdcdcd]" />
            <Tri d="M0 0L10 5L0 10Z" className="ml-[128px] mt-[11px] h-[10px] w-[6px]" />
          </div>
        </div>
      </div>
    </div>
  );
}

/* ---------- taskbar ---------- */

function Taskbar() {
  return (
    <div className="flex h-[85px] shrink-0 overflow-hidden bg-gradient-to-r from-[#1d1c1b] via-[#161616] to-[#030303] text-white">
      <Svg vb="0 0 40 40" className="ml-[40px] mt-[30px] h-[40px] w-[40px]">
        <path d="M0 5.500L16 3V18.500H0ZM18 2.600L40 0V18.500H18ZM0 20.500H16V37L0 34.500ZM18 20.500H40V40L18 37.400Z" fill="#fff" />
      </Svg>
      <Svg vb="0 0 40 40" className="ml-[80px] mt-[30px] h-[40px] w-[40px]">
        <circle cx="26" cy="14" r="13" stroke="#fff" strokeWidth="2.300" />
        <path d="M16 23L1 39" stroke="#fff" strokeWidth="2.300" />
      </Svg>
      <Svg vb="0 0 48 37" className="ml-[76px] mt-[32px] h-[37px] w-[48px]">
        <path d="M9 1H39V36H9ZM6 7H1V30H6M42 7H47V30H42" stroke="#fff" strokeWidth="2.300" />
      </Svg>
      <Svg vb="0 0 50 53" className="ml-[79px] mt-[23px] h-[53px] w-[50px]">
        <path d="M0 24C3 8 13 0 26 0C41 0 50 11 50 24V31H17C18 41 27 44 33 44C39 44 43 42 46 40V49C40 52 35 53 29 53C14 53 6 43 6 33C6 24 12 16 20 13C17 16 16.500 19 16.500 21H33C33 14 29 11 23 11C13 11 5 16 0 24Z" fill="#0078d7" />
      </Svg>
      <Svg vb="0 0 53 45" className="ml-[72px] mt-[27px] h-[45px] w-[53px]">
        <path d="M2 0H24L28 7H53V41Q53 42 51 42H2Q0 42 0 40V2Q0 0 2 0Z" fill="#ffe694" />
        <path d="M1 0H22L26 5L22 9H0V1Z" fill="#ffc935" />
        <path d="M4 3H14V6H4Z" fill="#fff" />
        <path d="M10 45V26Q10 23 13 23H41Q44 23 44 26V45H36V31H18V45Z" fill="#39b5e8" />
      </Svg>
      <Svg vb="0 0 53 60" className="ml-[71px] mt-[20px] h-[60px] w-[53px]">
        <path d="M10 16Q10 1 20 1Q30 1 33 12M15 15Q16 5 22 3Q30 1 36 11" stroke="#fff" strokeWidth="1.800" />
        <path d="M0 15L43 8L53 14V54L42 60L0 51Z" fill="#fff" />
        <path d="M9 26L20 24.500V34H9ZM21.500 24L33 22V34H21.500ZM9 35.500H20V45L9 44ZM21.500 35.500H33V47L21.500 45.500Z" fill="#1b1a1a" />
      </Svg>
      <Svg vb="0 0 59 47" className="ml-[68px] mt-[24px] h-[47px] w-[59px]">
        <path d="M29.500 0L59 15V47H0V15Z" fill="#fff" />
        <path d="M0 15H59L36 27L51 41Z" fill="#1b1a1a" />
      </Svg>
      <Svg vb="0 0 53 54" className="ml-[68px] mt-[23px] h-[54px] w-[53px]">
        <path d="M28 7H53V47H28Z" fill="#fff" stroke="#2b579a" strokeWidth="2" />
        <path d="M32 13H48M32 19H48M32 25H48M32 31H48M32 37H48M32 43H48" stroke="#2b579a" strokeWidth="2.600" />
        <path d="M0 5L31 0V54L0 48Z" fill="#2b579a" />
        <text x="4" y="35" fontSize="23" fontWeight="700" fill="#fff" textLength="22" lengthAdjust="spacingAndGlyphs">W</text>
      </Svg>
      <Svg vb="0 0 56 55" className="ml-[70px] mt-[23px] h-[55px] w-[56px]">
        <ellipse cx="17" cy="30" rx="17" ry="11" fill="#8a8a8a" stroke="#b04a48" strokeWidth="1" />
        <ellipse cx="26" cy="15" rx="25" ry="13" transform="rotate(-22 26 15)" fill="#f1f1f1" stroke="#c9403c" strokeWidth="1.500" />
        <path d="M26 6L33 33M8 19L34 34M18 12L40 8" stroke="#9a9fa8" strokeWidth="2.600" />
        <ellipse cx="34" cy="45" rx="6" ry="9" stroke="#1f86c8" strokeWidth="3.500" />
        <ellipse cx="45" cy="36" rx="10" ry="5" transform="rotate(35 45 36)" stroke="#1f86c8" strokeWidth="3.500" />
      </Svg>
      <div className="ml-[36px] w-[121px] bg-[#464646] pl-[30px] pt-[20px]">
        <div className="flex h-[60px] w-[61px] justify-end overflow-hidden bg-gradient-to-b from-[#2371a4] via-[#1690c9] to-[#0d5488]">
          <span className="text-[80px] font-bold leading-[54px]">a</span>
        </div>
      </div>
      <Svg vb="0 0 32 17" className="ml-[1165px] mt-[39px] h-[17px] w-[32px]">
        <path d="M1 16L16 1L31 16" stroke="#fff" strokeWidth="2.200" />
      </Svg>
      <Svg vb="0 0 38 22" className="ml-[45px] mt-[40px] h-[22px] w-[38px]">
        <path d="M1.200 1.200H34V20.800H1.200ZM36.500 7V15" stroke="#fff" strokeWidth="2.400" />
        <rect x="5" y="5" width="8" height="12" fill="#fff" />
      </Svg>
      <Svg vb="0 0 40 36" className="ml-[40px] mt-[32px] h-[36px] w-[40px]">
        <path d="M1 12H6L13 5V32L6 25H1ZM19 12Q24 18 19 24M25 7Q34 18 25 29M32 2Q45 18 32 35" stroke="#fff" strokeWidth="2" />
      </Svg>
      <Svg vb="0 0 31 31" className="ml-[47px] mt-[37px] h-[31px] w-[31px]">
        <path d="M1 30Q2 2 30 1M9 30Q10 11 30 10M18 30Q18 20 30 18" stroke="#fff" strokeWidth="2" />
        <circle cx="27" cy="27" r="3.200" fill="#fff" />
      </Svg>
      <Svg vb="0 0 69 39" className="ml-[37px] mt-[30px] h-[39px] w-[69px]">
        <rect x="1.500" y="1.500" width="66" height="36" rx="2" stroke="#fff" strokeWidth="3" />
        <path d="M9 11H60" stroke="#fff" strokeWidth="3" strokeDasharray="3 2.300" />
        <path d="M9 20H17M20 20H50M52 20H60" stroke="#fff" strokeWidth="3" strokeDasharray="4 1.500" />
        <path d="M9 29H17M21 29H48M52 29H60" stroke="#fff" strokeWidth="3" />
      </Svg>
      <Fit className="ml-[35px] mt-[31px] w-[51px] text-[28px] leading-[40px]">FRA</Fit>
      <div className="ml-[37px] mt-[8px] flex w-[150px] flex-col items-center">
        <Fit className="w-[68px] text-[28px] leading-[40px]">18:05</Fit>
        <Fit className="mt-[6px] w-[150px] text-[28px] leading-[40px]">24/10/2017</Fit>
      </div>
      <Svg vb="0 0 40 39" className="ml-[47px] mt-[30px] h-[39px] w-[40px]">
        <path d="M1.200 1.200H38.800V32.500H25L20 37.500L15 32.500H1.200Z" stroke="#fff" strokeWidth="2.300" />
      </Svg>
      <div className="ml-[51px] w-[2px] bg-[#5a5a5a]" />
    </div>
  );
}

export default function App() {
  return (
    <div className="flex h-[1714px] w-[3200px] flex-col overflow-hidden bg-[#e8e8e8] font-['Open_Sans','Noto_Sans',sans-serif]">
      <div className="flex h-[1629px] shrink-0 flex-col border-x border-[#9a9a9a]">
        <Header />
        <Categories />
        <Palette />
        <div className="flex h-[1282px]">
          <Configuration />
          <div className="mr-[4px] w-[4px] bg-[#e8e8e8]" />
          <div className="w-[6px] bg-[#d8d8d8]" />
          <div className="flex w-[1534px] flex-col">
            <Workflow />
            <Results />
          </div>
        </div>
      </div>
      <Taskbar />
    </div>
  );
}
